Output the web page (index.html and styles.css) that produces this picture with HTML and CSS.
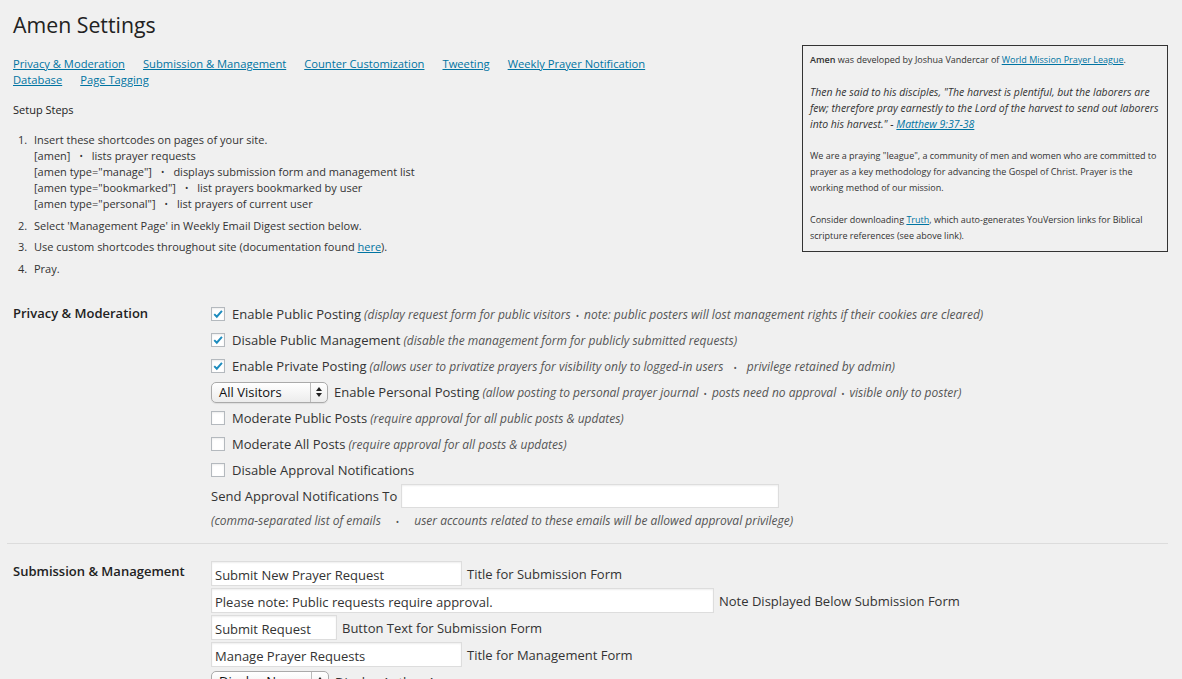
FILE: index.html
```html
<!DOCTYPE html>
<html>
<head>
<meta charset="utf-8">
<title>Amen Settings</title>
<link rel="stylesheet" href="styles.css">
</head>
<body>
<div class="wrap">
  <div class="top">
    <div class="intro">
      <h1>Amen Settings</h1>
      <nav class="nav">
        <a href="#">Privacy &amp; Moderation</a>
        <a href="#">Submission &amp; Management</a>
        <a href="#">Counter Customization</a>
        <a href="#">Tweeting</a>
        <a href="#">Weekly Prayer Notification</a>
        <a href="#">Database</a>
        <a href="#">Page Tagging</a>
      </nav>
      <div class="steps-title">Setup Steps</div>
      <ol class="steps">
        <li>Insert these shortcodes on pages of your site.<br>
          [amen]<span class="dot">•</span>lists prayer requests<br>
          [amen type="manage"]<span class="dot">•</span>displays submission form and management list<br>
          [amen type="bookmarked"]<span class="dot">•</span>list prayers bookmarked by user<br>
          [amen type="personal"]<span class="dot">•</span>list prayers of current user</li>
        <li>Select 'Management Page' in Weekly Email Digest section below.</li>
        <li>Use custom shortcodes throughout site (documentation found <a href="#">here</a>).</li>
        <li>Pray.</li>
      </ol>
    </div>
    <aside class="info">
      <p><strong>Amen</strong> was developed by Joshua Vandercar of <a href="#">World Mission Prayer League</a>.</p>
      <p class="quote"><em>Then he said to his disciples, "The harvest is plentiful, but the laborers are few; therefore pray earnestly to the Lord of the harvest to send out laborers into his harvest." - <a href="#">Matthew 9:37-38</a></em></p>
      <p>We are a praying "league", a community of men and women who are committed to prayer as a key methodology for advancing the Gospel of Christ. Prayer is the working method of our mission.</p>
      <p>Consider downloading <a href="#">Truth</a>, which auto-generates YouVersion links for Biblical scripture references (see above link).</p>
    </aside>
  </div>

  <section class="section privacy">
    <h2 class="sec-title">Privacy &amp; Moderation</h2>
    <div class="rows">
      <div class="row"><span class="cb checked"><svg viewBox="0 0 14 14" width="14" height="14"><path d="M2.6 7.2 L5.6 10.2 L11.6 3.4" fill="none" stroke="#1e8cbe" stroke-width="2.3"/></svg></span><span class="lbl">Enable Public Posting</span> <em class="desc">(display request form for public visitors<span class="sdot">•</span>note: public posters will lost management rights if their cookies are cleared)</em></div>
      <div class="row"><span class="cb checked"><svg viewBox="0 0 14 14" width="14" height="14"><path d="M2.6 7.2 L5.6 10.2 L11.6 3.4" fill="none" stroke="#1e8cbe" stroke-width="2.3"/></svg></span><span class="lbl">Disable Public Management</span> <em class="desc">(disable the management form for publicly submitted requests)</em></div>
      <div class="row"><span class="cb checked"><svg viewBox="0 0 14 14" width="14" height="14"><path d="M2.6 7.2 L5.6 10.2 L11.6 3.4" fill="none" stroke="#1e8cbe" stroke-width="2.3"/></svg></span><span class="lbl">Enable Private Posting</span> <em class="desc">(allows user to privatize prayers for visibility only to logged-in users<span class="mdot">•</span>privilege retained by admin)</em></div>
      <div class="row"><span class="select sel-visitors"><span class="sel-text">All Visitors</span><span class="sel-arrows"><svg viewBox="0 0 8 12" width="8" height="12"><path d="M4 1 L7 5 L1 5 Z M4 11 L7 7 L1 7 Z" fill="#222"/></svg></span></span><span class="lbl">Enable Personal Posting</span> <em class="desc">(allow posting to personal prayer journal<span class="sdot">•</span>posts need no approval<span class="sdot">•</span>visible only to poster)</em></div>
      <div class="row"><span class="cb"></span><span class="lbl">Moderate Public Posts</span> <em class="desc">(require approval for all public posts &amp; updates)</em></div>
      <div class="row"><span class="cb"></span><span class="lbl">Moderate All Posts</span> <em class="desc">(require approval for all posts &amp; updates)</em></div>
      <div class="row"><span class="cb"></span><span class="lbl">Disable Approval Notifications</span></div>
      <div class="row"><span class="lbl lbl-first">Send Approval Notifications To</span><span class="input w-email"></span></div>
      <div class="row note"><em class="desc">(comma-separated list of emails<span class="wdot">•</span>user accounts related to these emails will be allowed approval privilege)</em></div>
    </div>
  </section>

  <hr class="sep">

  <section class="section submission">
    <h2 class="sec-title">Submission &amp; Management</h2>
    <div class="rows tight">
      <div class="row"><span class="input w-mid">Submit New Prayer Request</span><span class="lbl">Title for Submission Form</span></div>
      <div class="row"><span class="input w-long">Please note: Public requests require approval.</span><span class="lbl">Note Displayed Below Submission Form</span></div>
      <div class="row"><span class="input w-short">Submit Request</span><span class="lbl">Button Text for Submission Form</span></div>
      <div class="row"><span class="input w-mid">Manage Prayer Requests</span><span class="lbl">Title for Management Form</span></div>
      <div class="row"><span class="select sel-author"><span class="sel-text">Display Name</span><span class="sel-arrows"><svg viewBox="0 0 8 12" width="8" height="12"><path d="M4 1 L7 5 L1 5 Z M4 11 L7 7 L1 7 Z" fill="#222"/></svg></span></span><span class="lbl">Display Author As</span></div>
    </div>
  </section>
</div>
</body>
</html>
```
FILE: styles.css
```css
html, body {
  margin: 0;
  padding: 0;
}
body {
  background: #f0f0f0;
  font-family: "Open Sans", "DejaVu Sans", sans-serif;
  color: #333;
  font-size: 13px;
  overflow: hidden;
  height: 679px;
}
a {
  color: #0074a2;
  text-decoration: underline;
}
.wrap {
  padding: 0 14px 0 13px;
}
.top {
  display: flex;
  align-items: flex-start;
  justify-content: space-between;
}
.intro {
  flex: 1;
}
h1 {
  margin: 0;
  padding-top: 10px;
  font-size: 21.3px;
  line-height: 29px;
  font-weight: 400;
  color: #222;
}
.nav {
  margin-top: 17px;
  max-width: 660px;
  display: flex;
  flex-wrap: wrap;
  column-gap: 18px;
  font-size: 11.2px;
  line-height: 16px;
}
.steps-title {
  margin-top: 14px;
  font-size: 11px;
  line-height: 16px;
  color: #222;
}
.steps {
  margin: 14px 0 0;
  padding-left: 21px;
  font-size: 11px;
  line-height: 16px;
  color: #333;
  list-style: none;
  counter-reset: step;
}
.steps li {
  margin-bottom: 5.5px;
  counter-increment: step;
}
.steps li::before {
  content: counter(step) ".";
  display: inline-block;
  width: 16px;
  margin-left: -16px;
}
.dot {
  display: inline-block;
  margin: 0 9px;
  font-size: 9px;
  line-height: 10px;
  vertical-align: 1px;
}
.info {
  width: 366px;
  box-sizing: border-box;
  margin-top: 45px;
  border: 1px solid #333;
  padding: 6px 7px 7px;
  font-size: 9px;
  line-height: 16px;
  color: #333;
}
.info p {
  margin: 0 0 16px;
}
.info p.quote {
  font-size: 10.5px;
}
.info p:last-child {
  margin-bottom: 0;
}
.info strong {
  font-weight: 600;
}

.section {
  display: grid;
  grid-template-columns: 198px 1fr;
}
.privacy {
  margin-top: 19px;
}
.sec-title {
  margin: 0;
  font-size: 13px;
  font-weight: 600;
  line-height: 24px;
  color: #222;
}
.rows {
  display: flex;
  flex-direction: column;
}
.row {
  display: flex;
  align-items: center;
  height: 26px;
  white-space: nowrap;
}
.row.note {
  height: 22px;
}
.lbl {
  color: #333;
  font-size: 13px;
}
.desc {
  margin-left: 3px;
  font-size: 12px;
  color: #555;
}
.note .desc {
  margin-left: 0;
}
.sdot, .mdot, .wdot {
  display: inline-block;
  font-size: 9px;
  font-style: normal;
  line-height: 10px;
}
.sdot {
  margin: 0 5px;
}
.mdot {
  margin: 0 10px;
}
.wdot {
  margin: 0 15px;
}
.cb {
  display: inline-flex;
  width: 14px;
  height: 14px;
  box-sizing: border-box;
  border: 1px solid #b4b9be;
  background: #fff;
  box-shadow: inset 0 1px 2px rgba(0,0,0,0.08);
  margin-right: 7px;
  align-items: center;
  justify-content: center;
}
.cb svg {
  display: block;
}
.select {
  display: inline-flex;
  align-items: stretch;
  height: 21px;
  box-sizing: border-box;
  border: 1px solid #aaa;
  border-radius: 5px;
  background: linear-gradient(#ffffff, #ececec);
  box-shadow: 0 1px 1px rgba(0,0,0,0.08);
  margin-right: 6px;
  font-size: 13px;
  color: #111;
}
.sel-visitors {
  width: 117px;
}
.sel-author {
  width: 118px;
}
.sel-text {
  flex: 1;
  padding-left: 7px;
  line-height: 19px;
}
.sel-arrows {
  width: 16px;
  border-left: 1px solid #bbb;
  display: flex;
  align-items: center;
  justify-content: center;
}
.input {
  display: inline-block;
  height: 25px;
  box-sizing: border-box;
  border: 1px solid #ddd;
  background: #fff;
  box-shadow: inset 0 1px 2px rgba(0,0,0,0.07);
  padding: 3px 3px 0;
  line-height: 20px;
  font-size: 13px;
  color: #333;
  margin-right: 5px;
}
.lbl-first {
  margin-right: 4px;
}
.w-email {
  width: 378px;
  height: 24px;
}
.w-mid {
  width: 251px;
}
.w-long {
  width: 503px;
}
.w-short {
  width: 126px;
}
.sep {
  margin: 12px 0 0 -6px;
  border: 0;
  border-top: 1px solid #dcdcdc;
  height: 0;
}
.submission {
  margin-top: 17px;
}
.submission .sec-title {
  line-height: 20px;
}
.rows.tight {
  gap: 2px;
}
.rows.tight .row {
  height: 25px;
}
```
